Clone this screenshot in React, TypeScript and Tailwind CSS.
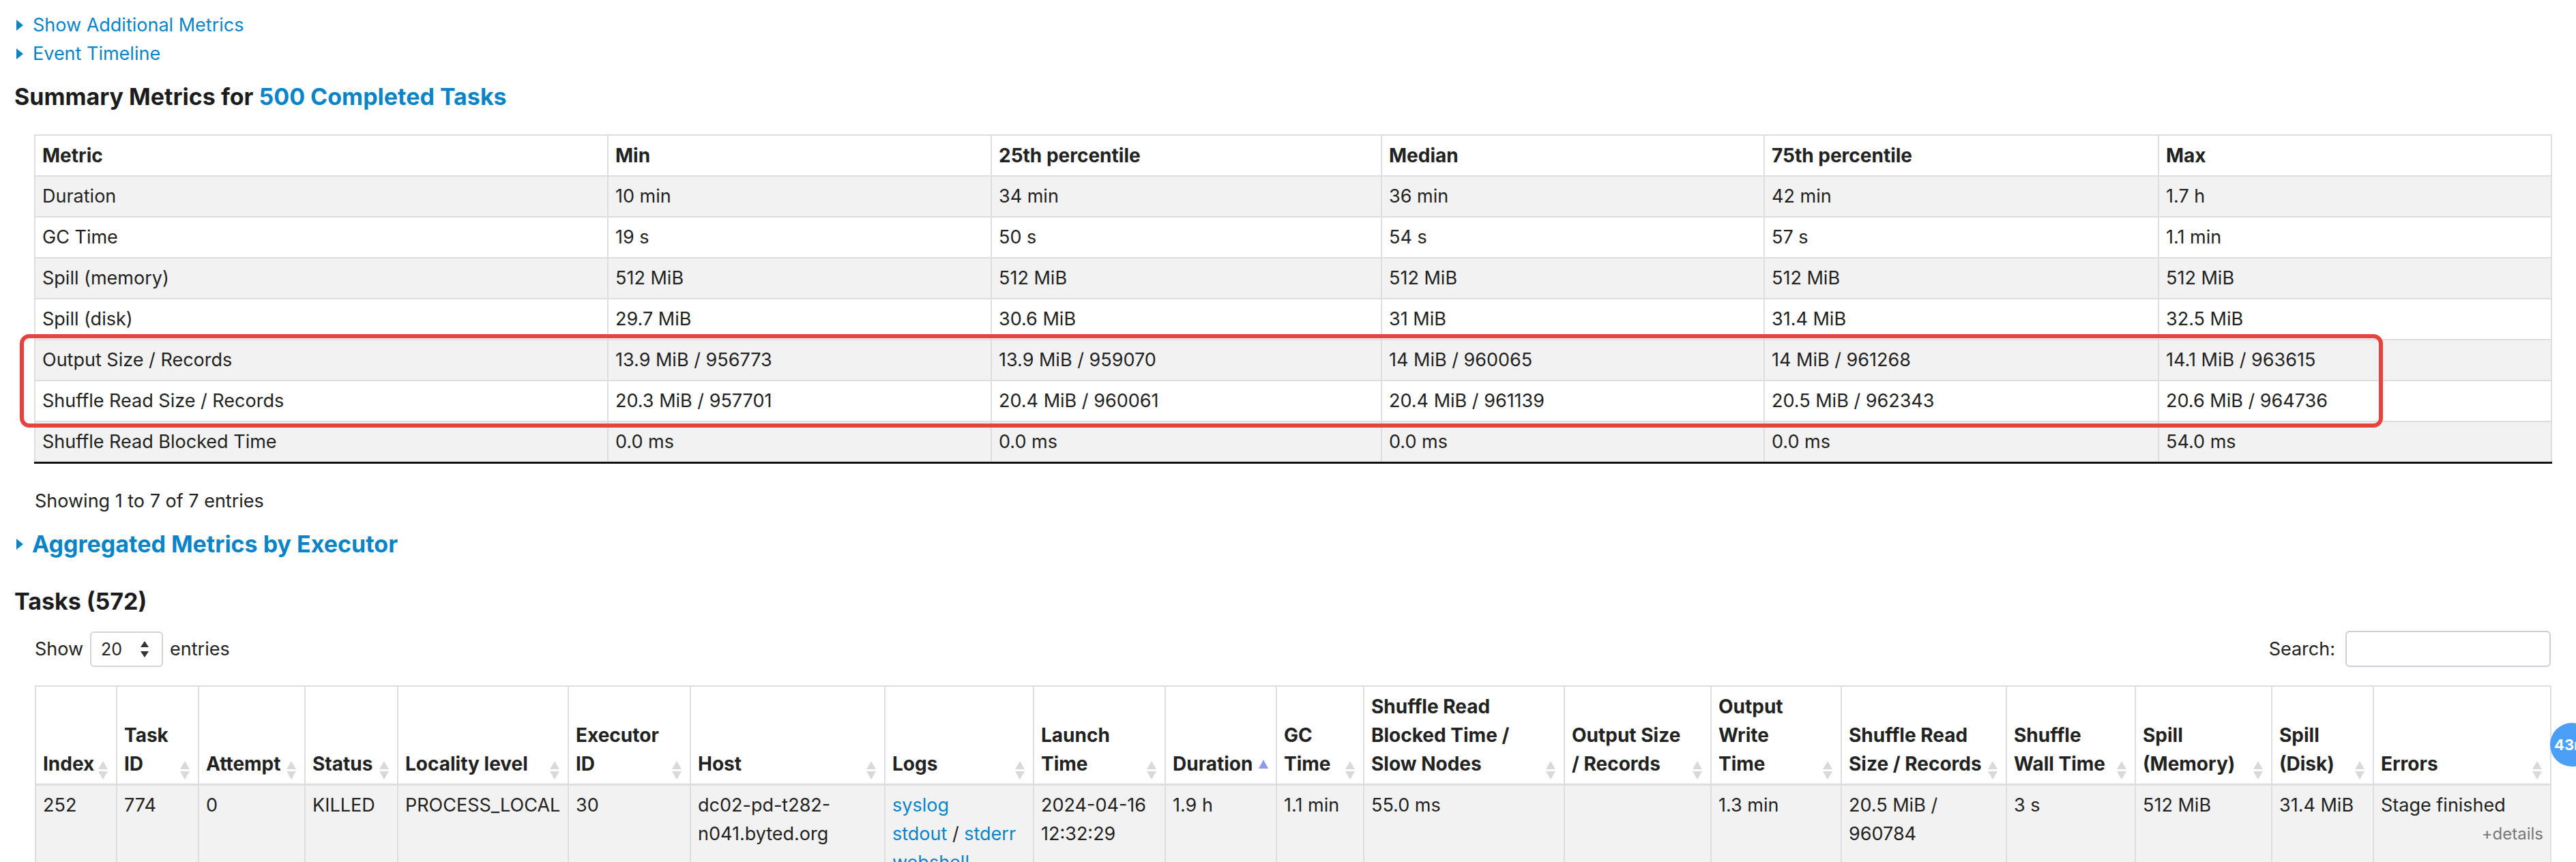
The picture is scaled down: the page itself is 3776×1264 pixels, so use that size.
import React from "react";

type SummaryRow = {
  metric: string;
  values: string[];
};

const summaryRows: SummaryRow[] = [
  { metric: "Duration", values: ["10 min", "34 min", "36 min", "42 min", "1.7 h"] },
  { metric: "GC Time", values: ["19 s", "50 s", "54 s", "57 s", "1.1 min"] },
  { metric: "Spill (memory)", values: ["512 MiB", "512 MiB", "512 MiB", "512 MiB", "512 MiB"] },
  { metric: "Spill (disk)", values: ["29.7 MiB", "30.6 MiB", "31 MiB", "31.4 MiB", "32.5 MiB"] },
  {
    metric: "Output Size / Records",
    values: ["13.9 MiB / 956773", "13.9 MiB / 959070", "14 MiB / 960065", "14 MiB / 961268", "14.1 MiB / 963615"],
  },
  {
    metric: "Shuffle Read Size / Records",
    values: ["20.3 MiB / 957701", "20.4 MiB / 960061", "20.4 MiB / 961139", "20.5 MiB / 962343", "20.6 MiB / 964736"],
  },
  { metric: "Shuffle Read Blocked Time", values: ["0.0 ms", "0.0 ms", "0.0 ms", "0.0 ms", "54.0 ms"] },
];

const summaryCols = [
  { label: "Metric", w: "w-[840px]" },
  { label: "Min", w: "w-[562px]" },
  { label: "25th percentile", w: "w-[572px]" },
  { label: "Median", w: "w-[561px]" },
  { label: "75th percentile", w: "w-[578px]" },
  { label: "Max", w: "w-[576px]" },
];

type TaskCol = { lines: string[]; w: string; asc?: boolean };

const taskCols: TaskCol[] = [
  { lines: ["Index"], w: "w-[119px]" },
  { lines: ["Task", "ID"], w: "w-[120px]" },
  { lines: ["Attempt"], w: "w-[156px]" },
  { lines: ["Status"], w: "w-[136px]" },
  { lines: ["Locality level"], w: "w-[250px]" },
  { lines: ["Executor", "ID"], w: "w-[179px]" },
  { lines: ["Host"], w: "w-[285px]" },
  { lines: ["Logs"], w: "w-[218px]" },
  { lines: ["Launch", "Time"], w: "w-[193px]" },
  { lines: ["Duration"], w: "w-[163px]", asc: true },
  { lines: ["GC", "Time"], w: "w-[128px]" },
  { lines: ["Shuffle Read", "Blocked Time /", "Slow Nodes"], w: "w-[294px]" },
  { lines: ["Output Size", "/ Records"], w: "w-[215px]" },
  { lines: ["Output", "Write", "Time"], w: "w-[191px]" },
  { lines: ["Shuffle Read", "Size / Records"], w: "w-[242px]" },
  { lines: ["Shuffle", "Wall Time"], w: "w-[189px]" },
  { lines: ["Spill", "(Memory)"], w: "w-[200px]" },
  { lines: ["Spill", "(Disk)"], w: "w-[149px]" },
  { lines: ["Errors"], w: "w-[260px]" },
];

const td = "border-2 border-[#dedede] px-[10px] py-[8px] align-top";

function Caret() {
  return <span className="inline-block w-0 h-0 border-y-[8px] border-y-transparent border-l-[10px] border-l-[#0a84c6] mr-[14px]" />;
}

function SortArrows({ asc }: { asc?: boolean }) {
  if (asc) {
    return (
      <svg className="absolute right-[11px] bottom-[22px]" width="14" height="13" viewBox="0 0 14 13">
        <path d="M7 0 L14 13 L0 13 Z" fill="#8e98ec" />
      </svg>
    );
  }
  return (
    <svg className="absolute right-[12px] bottom-[6px]" width="14" height="27" viewBox="0 0 14 27">
      <path d="M7 0 L14 12 L0 12 Z" fill="#d9d9d9" />
      <path d="M0 15 L14 15 L7 27 Z" fill="#d9d9d9" />
    </svg>
  );
}

export default function App() {
  return (
    <div className="relative w-[3776px] h-[1264px] overflow-hidden bg-white text-[#222] font-['Inter','Liberation_Sans',sans-serif] text-[27px] leading-[42px]">
      <div className="pt-[16px] pl-[24px]">
        <div className="flex items-center text-[#0a84c6]">
          <Caret />
          <span>Show Additional Metrics</span>
        </div>
        <div className="flex items-center text-[#0a84c6]">
          <Caret />
          <span>Event Timeline</span>
        </div>
      </div>

      <h4 className="mt-[21px] pl-[21px] text-[34px] font-bold text-[#1c1c1e]">
        Summary Metrics for <span className="text-[#0a84c6]">500 Completed Tasks</span>
      </h4>

      <div className="relative mt-[34px] ml-[50px] w-[3689px]">
        <table className="table-fixed border-collapse w-[3689px] border-b-[3px] border-b-[#111]">
          <thead>
            <tr>
              {summaryCols.map((c) => (
                <th
                  key={c.label}
                  className={`${c.w} border-2 border-[#dedede] px-[10px] py-[8px] text-left text-[28px] font-bold align-bottom`}
                >
                  {c.label}
                </th>
              ))}
            </tr>
          </thead>
          <tbody>
            {summaryRows.map((r, i) => (
              <tr key={r.metric} className={i % 2 === 0 ? "bg-[#f2f2f2]" : "bg-white"}>
                <td className="border-x-2 border-t-2 border-[#dedede] px-[10px] py-[8px]">{r.metric}</td>
                {r.values.map((v, j) => (
                  <td key={j} className="border-x-2 border-t-2 border-[#dedede] px-[10px] py-[8px]">
                    {v}
                  </td>
                ))}
              </tr>
            ))}
          </tbody>
        </table>
        <div className="absolute left-[-21px] top-[293px] w-[3464px] h-[137px] border-[6px] border-[#e8423f] rounded-[14px] pointer-events-none" />
      </div>

      <div className="mt-[34px] pl-[51px]">Showing 1 to 7 of 7 entries</div>

      <h4 className="mt-[21px] pl-[24px] flex items-center text-[34px] font-bold text-[#0a84c6]">
        <Caret />
        <span className="-ml-[1px]">Aggregated Metrics by Executor</span>
      </h4>

      <h4 className="mt-[42px] pl-[21px] text-[34px] font-bold text-[#1c1c1e]">Tasks (572)</h4>

      <div className="mt-[22px] ml-[51px] w-[3688px] flex items-center justify-between">
        <div className="flex items-center">
          <span>Show</span>
          <div className="mx-[10px] w-[107px] h-[52px] border-2 border-[#d4d4d4] rounded-[6px] flex items-center justify-between pl-[14px] pr-[18px]">
            <span className="text-[25px]">20</span>
            <svg width="14" height="24" viewBox="0 0 14 24">
              <path d="M7 0 L13 9 L1 9 Z" fill="#333" />
              <path d="M1 15 L13 15 L7 24 Z" fill="#333" />
            </svg>
          </div>
          <span>entries</span>
        </div>
        <div className="flex items-center">
          <span className="mr-[15px]">Search:</span>
          <div className="w-[301px] h-[53px] border-2 border-[#ccd0d4] rounded-[6px]" />
        </div>
      </div>

      <table className="mt-[27px] ml-[51px] table-fixed border-collapse w-[3687px]">
        <thead>
          <tr>
            {taskCols.map((c, i) => (
              <th
                key={i}
                className={`${c.w} relative border-2 border-b-[3px] border-[#dedede] pl-[10px] pr-[8px] py-[8px] text-left text-[28px] font-bold align-bottom whitespace-nowrap`}
              >
                {c.lines.map((l) => (
                  <div key={l}>{l}</div>
                ))}
                <SortArrows asc={c.asc} />
              </th>
            ))}
          </tr>
        </thead>
        <tbody>
          <tr className="bg-[#f2f2f2] h-[220px]">
            <td className={td}>252</td>
            <td className={td}>774</td>
            <td className={td}>0</td>
            <td className={td}>KILLED</td>
            <td className={td}>PROCESS_LOCAL</td>
            <td className={td}>30</td>
            <td className={td}>
              <div>dc02-pd-t282-</div>
              <div>n041.byted.org</div>
            </td>
            <td className={td}>
              <div className="text-[#0a84c6]">syslog</div>
              <div>
                <span className="text-[#0a84c6]">stdout</span> / <span className="text-[#0a84c6]">stderr</span>
              </div>
              <div className="text-[#0a84c6]">webshell</div>
            </td>
            <td className={td}>
              <div>2024-04-16</div>
              <div>12:32:29</div>
            </td>
            <td className={td}>1.9 h</td>
            <td className={td}>1.1 min</td>
            <td className={td}>55.0 ms</td>
            <td className={td}></td>
            <td className={td}>1.3 min</td>
            <td className={td}>
              <div>20.5 MiB /</div>
              <div>960784</div>
            </td>
            <td className={td}>3 s</td>
            <td className={td}>512 MiB</td>
            <td className={td}>31.4 MiB</td>
            <td className={td}>
              <div>Stage finished</div>
              <div className="text-right text-[24px] text-[#777]">+details</div>
            </td>
          </tr>
        </tbody>
      </table>

      <div className="absolute left-[3738px] top-[1060px] w-[64px] h-[64px] rounded-full bg-[#4b9ff7] flex items-center pl-[6px] text-white text-[22px] font-bold">
        43ms
      </div>
    </div>
  );
}
